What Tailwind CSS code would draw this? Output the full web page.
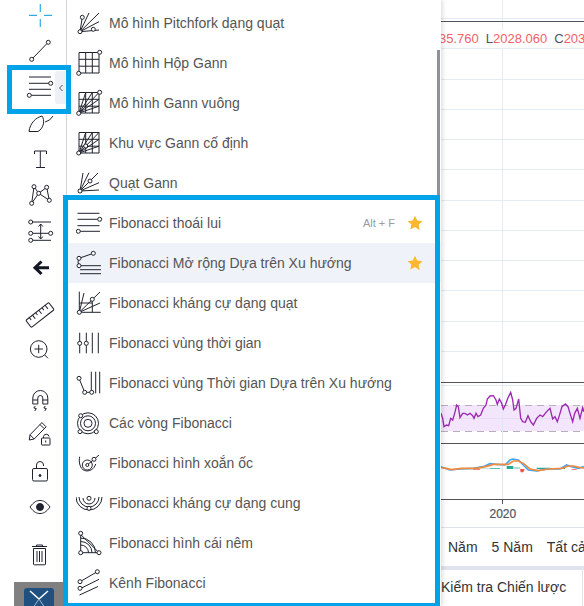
<!DOCTYPE html>
<html lang="vi">
<head>
<meta charset="UTF-8">
<title>Fibonacci tools</title>
<script src="https://cdn.jsdelivr.net/npm/@tailwindcss/browser@4"></script>
</head>
<body class="bg-white overflow-hidden font-['Liberation_Sans',Arial,sans-serif]">
<div class="relative flex w-[584px] h-[606px] overflow-hidden">

  <!-- left toolbar -->
  <div class="w-[67px] shrink-0 border-r border-[#d6d8e0] flex flex-col -mt-[3px] h-[609px] bg-white">
    <div class="h-9 pl-[22px]"><svg width="36" height="36" fill="none" stroke="#3ba7e3" stroke-width="1.2"><path d="M7 18.3h8M22 18.3h8M18.3 7v8M18.3 22v8"/></svg></div>
    <div class="h-9 pl-[22px]"><svg width="36" height="36" fill="#fff" stroke="#20232e"><path d="M25 10.5L11 25"/><circle cx="26.3" cy="9.3" r="2"/><circle cx="9.7" cy="26.3" r="2"/></svg></div>
    <div class="h-9 pl-[22px]"><svg width="36" height="36" fill="#fff" stroke="#20232e"><path d="M7 8h22M7 14.3h20M7 20.3h22M9 26.3h20"/><circle cx="28.7" cy="14.3" r="2"/><circle cx="7.3" cy="26.3" r="2"/></svg></div>
    <div class="h-9 pl-[22px]"><svg width="36" height="36" fill="none" stroke="#20232e"><path d="M7 26.500C8 18 14 12.500 20 11C23 15 22 23 16 26.500Z"/><path d="M23 17Q28 16 31 11"/></svg></div>
    <div class="h-9 pl-[22px]"><svg width="36" height="36" fill="none" stroke="#20232e"><path d="M12.5 13v-3h12v3M18.3 10v16.5M14 26.5h9"/></svg></div>
    <div class="h-9 pl-[22px]"><svg width="36" height="36" fill="#fff" stroke="#20232e"><path d="M12 9.7L9.7 26.3M12 9.7L16.7 16.3L24.7 10.3L27.3 23.3M16.7 16.3L9.7 26.3M16.7 16.3L27.3 23.3"/><circle cx="12" cy="9.7" r="2"/><circle cx="24.7" cy="10.3" r="2"/><circle cx="16.7" cy="16.3" r="2"/><circle cx="9.7" cy="26.3" r="2"/><circle cx="27.3" cy="23.3" r="2"/></svg></div>
    <div class="h-9 pl-[22px]"><svg width="36" height="36" fill="#fff" stroke="#20232e"><path d="M9 9h20M9 20.3h20M9 27.3h20M18.7 11v15M16.5 13.5l2.2-2.5 2.2 2.5M16.5 23.5l2.2 2.5 2.2-2.5"/><circle cx="8.7" cy="9" r="2"/><circle cx="8.7" cy="20.3" r="2"/><circle cx="28.7" cy="20.3" r="2"/><circle cx="8.7" cy="27.3" r="2"/></svg></div>
    <div class="h-9 pl-[22px]"><svg width="36" height="36" fill="none" stroke="#131722" stroke-width="3"><path d="M27 18.7H14M19.5 12.5L13 18.7L19.5 25"/></svg></div>
    <div class="mt-[6px] ml-[14px] h-px bg-[#e0e3eb]"></div>
    <div class="mt-[6px] h-9 pl-[22px]"><svg width="36" height="36" fill="none" stroke="#20232e"><g transform="rotate(-38 18 18)"><rect x="3.5" y="13.5" width="29" height="9" rx="1"/><path d="M8 13.5v3M12 13.5v4.5M16 13.5v3M20 13.5v4.5M24 13.5v3M28 13.5v4.5"/></g></svg></div>
    <div class="h-9 pl-[22px]"><svg width="36" height="36" fill="none" stroke="#20232e"><circle cx="16.7" cy="16" r="8.3"/><path d="M22.8 22L26 25.3M12.5 16h8.4M16.7 11.8v8.4"/></svg></div>
    <div class="mt-[6px] ml-[14px] h-px bg-[#e0e3eb]"></div>
    <div class="mt-[6px] h-9 pl-[22px]"><svg width="36" height="36" fill="none" stroke="#20232e"><path d="M10.800 23V17a7.500 7.500 0 0 1 15 0v6h-5V17a2.500 2.500 0 0 0-5 0v6zM10.800 19h5M20.800 19h5M13.300 25l-1.500 2 2.500.5-1.500 2.500M23.300 25l-1.500 2 2.500.5-1.500 2.500"/></svg></div>
    <div class="h-9 pl-[22px]"><svg width="36" height="36" fill="none" stroke="#20232e"><path d="M7.300 23L8 17.800L19.900 5.600L24.100 9.800L12.200 22ZM8 17.800L12.200 22M18 7.500L22.200 11.700"/><path d="M21.500 21v-1.500a2.800 2.800 0 0 1 5.500 0"/><rect x="19.500" y="21" width="8.500" height="7" rx="0.500" fill="#fff"/><path d="M23.700 23.500v2"/></svg></div>
    <div class="h-9 pl-[22px]"><svg width="36" height="36" fill="none" stroke="#20232e"><rect x="10.500" y="15.500" width="15" height="12.500" rx="1.500"/><path d="M14.500 15.500v-3.500a3.500 3.500 0 0 1 7 0v1"/><circle cx="18" cy="22.500" r="1" fill="#20232e"/></svg></div>
    <div class="h-9 pl-[22px]"><svg width="36" height="36" fill="none" stroke="#20232e"><path d="M8 18C12 12.500 15 11.500 18 11.500S24 12.500 28 18C24 23.500 21 24.500 18 24.500S12 23.500 8 18Z"/><circle cx="18" cy="18" r="3.500" fill="#20232e"/></svg></div>
    <div class="mt-[6px] ml-[14px] h-px bg-[#e0e3eb]"></div>
    <div class="mt-[6px] h-9 pl-[22px]"><svg width="36" height="36" fill="none" stroke="#20232e"><path d="M10 9.500h15M14.500 9.500V8h6v1.500M11.500 11.500h12V27a.8.800 0 0 1-.8.800H12.300a.8.800 0 0 1-.8-.800zM15 14v11M17.500 14v11M20 14v11"/></svg></div>
    <div class="mt-[9px] ml-[14px] mr-[2px] flex-1 bg-[#808080] flex justify-center items-start pt-[6px]">
      <div class="w-[30px] h-[20px] rounded-t-[3px] bg-[#1f5080] flex justify-center">
        <svg width="30" height="20" fill="none" stroke="#fff"><path stroke-width="1.500" d="M6 3l9 8 9-8"/><path stroke="#9db8cf" d="M15 11l-6 9M15 11l6 9"/></svg>
      </div>
    </div>
  </div>

  <!-- drawing tools menu -->
  <div class="relative z-10 w-[374px] h-full shrink-0 bg-white pt-[3px] shadow-[2px_0_4px_rgba(0,0,0,0.12)]">
    <div class="flex items-center h-10 pl-[9px] gap-[5px] text-[14px] text-[#555]">
      <svg width="28" height="28" fill="#fff" stroke="#20232e"><path d="M4 22.700L13 4M4 22.700L23 4M4 22.700L23 12.700M4 22.700L23 21M4 22.700L6.300 8.300"/><circle cx="4" cy="22.700" r="2"/><circle cx="6.300" cy="8.300" r="2"/><circle cx="17.300" cy="20.300" r="2"/></svg>
      <span>Mô hình Pitchfork dạng quạt</span>
    </div>
    <div class="flex items-center h-10 pl-[9px] gap-[5px] text-[14px] text-[#555]">
      <svg width="28" height="28" fill="#fff" stroke="#20232e"><path fill="none" d="M3 3.500h20v20.500H3zM9.700 3.500V24M16.300 3.500V24M3 10.300h20M3 17.200h20"/><circle cx="23.700" cy="3.300" r="2"/><circle cx="2.700" cy="24.300" r="2"/></svg>
      <span>Mô hình Hộp Gann</span>
    </div>
    <div class="flex items-center h-10 pl-[9px] gap-[5px] text-[14px] text-[#555]">
      <svg width="28" height="28" fill="#fff" stroke="#20232e"><path fill="none" d="M3 3.500h20v20.500H3zM9.700 3.500V24M16.300 3.500V24M3 10.300h20M3 17.200h20M3 24L23 3.500M3 24L9.700 3.500M3 24L16.300 3.500M3 24L23 10.300M3 24L23 17.200"/><circle cx="23.700" cy="3.300" r="2"/><circle cx="2.700" cy="24.300" r="2"/></svg>
      <span>Mô hình Gann vuông</span>
    </div>
    <div class="flex items-center h-10 pl-[9px] gap-[5px] text-[14px] text-[#555]">
      <svg width="28" height="28" fill="#fff" stroke="#20232e"><path fill="none" d="M3 3.500h20v20.500H3zM9.700 3.500V24M16.300 3.500V24M3 10.300h20M3 17.200h20M3 24L23 3.500M3 24L9.700 3.500M3 24L16.300 3.500M3 24L23 10.300M3 24L23 17.200"/><circle cx="2.700" cy="24" r="2"/><circle cx="9.700" cy="17" r="2"/></svg>
      <span>Khu vực Gann cố định</span>
    </div>
    <div class="flex items-center h-10 pl-[9px] gap-[5px] text-[14px] text-[#555]">
      <svg width="28" height="28" fill="#fff" stroke="#20232e"><path d="M4 22L7 4M4 22L13 3.700M4 22L22 4M4 22L23 13.700M4 22L23 21"/><circle cx="4" cy="22" r="2"/><circle cx="14" cy="12" r="2"/></svg>
      <span>Quạt Gann</span>
    </div>

    <div class="flex items-center h-10 pl-[9px] pr-[18px] gap-[5px] text-[14px] text-[#555]">
      <svg width="28" height="28" fill="#fff" stroke="#20232e"><path d="M1.500 4.300h22M1.500 10.300h22M1.500 16.700h22M2 22.300h22"/><circle cx="23.700" cy="10.300" r="2"/><circle cx="2.300" cy="22.300" r="2"/></svg>
      <span class="flex-1">Fibonacci thoái lui</span>
      <span class="text-[11px] text-[#9b9ba3] mr-[7px]">Alt + F</span>
      <svg width="16" height="16" viewBox="0 0 24 24" fill="#fdb72f"><path d="M12 1l3.400 7.300 7.900 1-5.800 5.500 1.500 7.900L12 17.900l-7 3.800 1.500-7.900L.7 9.300l7.900-1z"/></svg>
    </div>
    <div class="flex items-center h-10 pl-[9px] pr-[18px] gap-[5px] text-[14px] text-[#555] bg-[#eff2f9]">
      <svg width="28" height="28" fill="#fff" stroke="#20232e"><path d="M3 9.300L17.300 4.300"/><path fill="none" d="M3 9.300Q1 13 3 16.700M4 16.700h21M4 20.700h21M4 24.700h21"/><circle cx="3" cy="9.300" r="2"/><circle cx="17.300" cy="4.300" r="2"/><circle cx="3" cy="16.700" r="2"/></svg>
      <span class="flex-1">Fibonacci Mở rộng Dựa trên Xu hướng</span>
      <svg width="16" height="16" viewBox="0 0 24 24" fill="#fdb72f"><path d="M12 1l3.400 7.300 7.900 1-5.800 5.500 1.500 7.900L12 17.900l-7 3.800 1.500-7.900L.7 9.300l7.900-1z"/></svg>
    </div>
    <div class="flex items-center h-10 pl-[9px] gap-[5px] text-[14px] text-[#555]">
      <svg width="28" height="28" fill="#fff" stroke="#20232e"><path d="M3.300 2.700V23.300H24.700M3.300 23.300L8 4M3.300 23.300L24 3M3.300 23.300L24 14M3.300 14H16.300M16.300 10.300V23.300"/><circle cx="3.300" cy="23.300" r="2"/><circle cx="16.300" cy="10.300" r="2"/></svg>
      <span>Fibonacci kháng cự dạng quạt</span>
    </div>
    <div class="flex items-center h-10 pl-[9px] gap-[5px] text-[14px] text-[#555]">
      <svg width="28" height="28" fill="#fff" stroke="#20232e"><path d="M3.700 3.700V24.300M10.300 3.700V24.300M16.300 3.700V24.300M22.300 3.700V24.300"/><circle cx="3.700" cy="14.300" r="2"/><circle cx="10.300" cy="14.300" r="2"/></svg>
      <span>Fibonacci vùng thời gian</span>
    </div>
    <div class="flex items-center h-10 pl-[9px] gap-[5px] text-[14px] text-[#555]">
      <svg width="28" height="28" fill="#fff" stroke="#20232e"><path d="M15.300 2.700V22M19.700 2.700V24.300M23.700 2.700V24.300M3 9.300L8.700 23.300H15.700"/><circle cx="3" cy="9.300" r="2"/><circle cx="8.700" cy="23.300" r="2"/><circle cx="15.700" cy="23.300" r="2"/></svg>
      <span>Fibonacci vùng Thời gian Dựa trên Xu hướng</span>
    </div>
    <div class="flex items-center h-10 pl-[9px] gap-[5px] text-[14px] text-[#555]">
      <svg width="28" height="28" fill="none" stroke="#20232e"><circle cx="12" cy="14.300" r="10.500"/><circle cx="12" cy="14.300" r="7.500"/><circle cx="12" cy="14.300" r="4"/><circle cx="4.700" cy="6.700" r="2" fill="#fff"/><circle cx="4" cy="22.700" r="2" fill="#fff"/><circle cx="20.300" cy="22.700" r="2" fill="#fff"/></svg>
      <span>Các vòng Fibonacci</span>
    </div>
    <div class="flex items-center h-10 pl-[9px] gap-[5px] text-[14px] text-[#555]">
      <svg width="28" height="28" fill="none" stroke="#20232e"><path d="M3.700 7.700C2.500 13 4 20 8.500 21.500C13 23 18 20.500 19.700 15"/><circle cx="11.300" cy="16" r="5"/><path d="M11.300 16L18 10.300L23 6"/><circle cx="18" cy="10.300" r="2" fill="#fff"/><circle cx="11.300" cy="16" r="1.500" fill="#fff"/></svg>
      <span>Fibonacci hình xoắn ốc</span>
    </div>
    <div class="flex items-center h-10 pl-[9px] gap-[5px] text-[14px] text-[#555]">
      <svg width="28" height="28" fill="none" stroke="#20232e"><path d="M0 8A13 13 0 0 0 26 8M3 8A10 10 0 0 0 23 8M7 9A6 6 0 0 0 19 9"/><circle cx="13" cy="9.300" r="2" fill="#fff"/><circle cx="13" cy="19.300" r="2" fill="#fff"/></svg>
      <span>Fibonacci kháng cự dạng cung</span>
    </div>
    <div class="flex items-center h-10 pl-[9px] gap-[5px] text-[14px] text-[#555]">
      <svg width="28" height="28" fill="none" stroke="#20232e"><path d="M4.700 4.300V23.700H23M4.700 5.500L23 23.700M4.700 9A14.700 14.700 0 0 1 19.500 23.700M4.700 12.500A11.200 11.200 0 0 1 16 23.700M4.700 16A7.700 7.700 0 0 1 12.500 23.700"/><circle cx="4.700" cy="4.300" r="2" fill="#fff"/><circle cx="4.700" cy="23.700" r="2" fill="#fff"/><circle cx="23" cy="23.700" r="2" fill="#fff"/></svg>
      <span>Fibonacci hình cái nêm</span>
    </div>
    <div class="flex items-center h-10 pl-[9px] gap-[5px] text-[14px] text-[#555]">
      <svg width="28" height="28" fill="#fff" stroke="#20232e"><path d="M4 12.700L21.300 2.700M5 19.300L23 10.300M3.500 26L22 17.500"/><circle cx="21.300" cy="2.700" r="2"/><circle cx="4" cy="12.700" r="2"/><circle cx="4" cy="19.300" r="2"/></svg>
      <span>Kênh Fibonacci</span>
    </div>

    <div class="absolute right-[1px] top-[50px] w-[3px] h-[150px] bg-[#8f919b]"></div>
  </div>

  <!-- chart behind the menu -->
  <div class="relative flex-1 flex flex-col min-w-0 overflow-hidden">
    <svg width="143" height="527" class="block shrink-0" fill="none">
      <g stroke="#e3ecf2">
        <path d="M0 18.500h143M0 48.500h143M0 79.500h143M0 109.500h143M0 139.500h143M0 169.500h143M0 200.500h143M0 230.500h143M0 260.500h143M0 290.500h143M0 321.500h143M0 351.500h143M0 385.500h143M61.500 0v499"/>
      </g>
      <rect x="0" y="405" width="143" height="26" fill="#f3e6fc"/>
      <path d="M0 418.500h143" stroke="#e6dff0"/>
      <path d="M0 405.500h143M0 431.500h143" stroke="#b8aebc" stroke-dasharray="7 5"/>
      <path d="M61.500 385v114" stroke="#dfe7f1"/>
      <path d="M0 21.500h143M0 382.500h143M0 443.500h143M0 499.500h143" stroke="#50535e"/>
      <path d="M61.500 499v5" stroke="#50535e"/>
      <svg x="-1" y="385" width="144" height="90" viewBox="0 0 432 270" fill="none">
        <polyline stroke-width="4" stroke="#9c27b0" points="3,85 8,100 12,125 20,120 26,122 32,100 38,105 44,85 50,60 55,65 60,98 68,85 75,85 82,90 90,85 98,92 102,100 108,85 114,95 122,90 130,70 138,60 142,42 150,33 160,32 168,45 172,58 178,42 185,55 190,72 196,60 204,38 212,22 218,45 222,75 228,70 236,42 242,100 248,110 256,112 264,92 272,110 280,120 290,100 300,90 308,95 318,82 330,70 338,102 345,95 352,110 358,92 366,65 376,57 384,65 390,85 398,110 404,85 412,70 420,100 428,68 432,80"/>
        <path d="M150 252v-2h30v2zM200 252v-9h20v9zM290 252v-4h40v4zM345 252v-3h30v3z" fill="#26a69a"/>
        <path d="M220 252v-6h20v6zM120 252v-2h30v2z" fill="#b2dfdb"/>
        <path d="M240 252h14l-4 10h-8zM40 252h20v2H40zM100 252h20v2h-20zM395 252h15v2h-15z" fill="#ef5350"/>
        <polyline stroke-width="5" stroke="#42a5f5" points="0,245 15,250 30,255 60,252 100,250 130,245 150,236 170,238 195,240 210,225 218,222 235,225 250,240 265,255 290,258 320,252 360,252 380,240 395,245 415,250 432,245"/>
        <polyline stroke-width="5" stroke="#f08a3c" points="0,247 18,250 35,254 65,250 110,250 140,244 160,238 180,238 205,238 220,228 235,228 250,235 270,252 295,257 325,252 365,250 385,243 400,243 420,248 432,249"/>
      </svg>
      <text x="48.500" y="518" font-size="12" fill="#50535e" stroke="#50535e" stroke-width="0.200">2020</text>
    </svg>
    <div class="absolute top-[30px] left-0 w-[200px] h-[18px] bg-white/90 flex items-center text-[13px] whitespace-nowrap -ml-[2px] text-[#f0616a]">
      <span class="mr-[7px]">35.760</span>
      <span class="mr-[7px]"><span class="text-[#50535e]">L</span>2028.060</span>
      <span><span class="text-[#50535e]">C</span>2031.450</span>
    </div>
    <div class="h-[39px] border-t border-[#e0e3eb] flex items-center gap-[14px] text-[14px] text-[#333] whitespace-nowrap shrink-0">
      <span class="w-px h-[11px] bg-[#d6d8e0] -mr-[7px]"></span><span>Năm</span><span>5 Năm</span><span>Tất cả</span>
    </div>
    <div class="h-1 bg-[#e0e3eb] shrink-0"></div>
    <div class="flex-1 w-[142px] border-r border-[#e0e3eb] flex items-center text-[14px] text-[#333] whitespace-nowrap pb-[2px]">Kiểm tra Chiến lược</div>
  </div>

  <!-- highlight frames -->
  <div class="absolute z-20 left-[7px] top-[65px] w-[64px] h-[49px] border-[5px] border-[#00a2e8] bg-white">
    <div class="absolute left-[43px] top-[1px] w-[11px] h-[33px] rounded-l-[3px] bg-[#eef0f8] flex items-center justify-center">
      <svg width="6" height="8" fill="none" stroke="#50535e"><path d="M4.500 1L1.500 4l3 3"/></svg>
    </div>
    <svg width="36" height="36" fill="#fff" stroke="#20232e" class="absolute left-[10px] top-[-1px]"><path d="M7 8h22M7 14.300h20M7 20.300h22M9 26.300h20"/><circle cx="28.700" cy="14.300" r="2"/><circle cx="7.300" cy="26.300" r="2"/></svg>
  </div>
  <div class="absolute z-20 left-[63px] top-[195px] w-[377px] h-[413px] border-[5px] border-[#00a2e8]"></div>
</div>
</body>
</html>
